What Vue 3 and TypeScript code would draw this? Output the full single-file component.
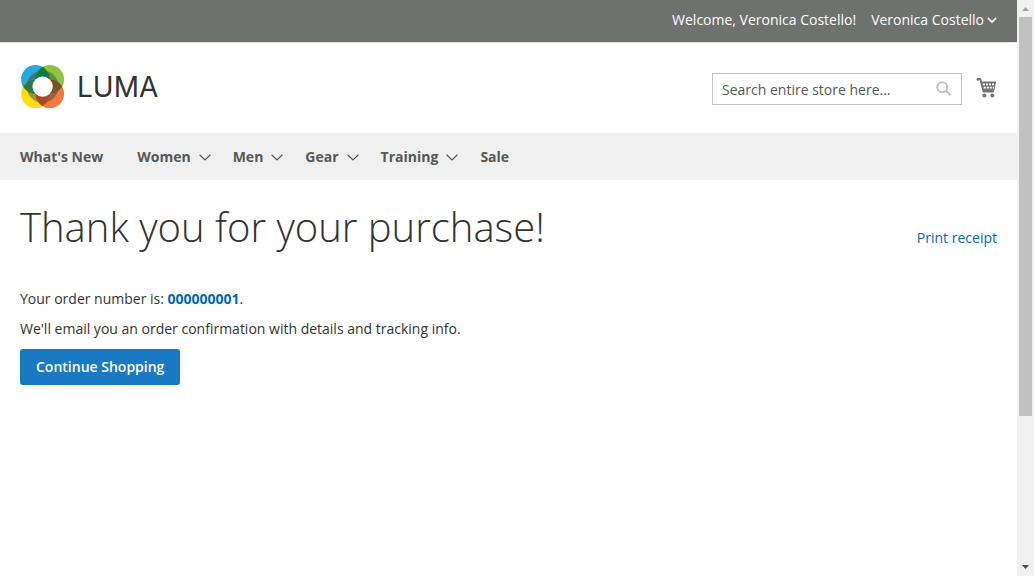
<script setup lang="ts">
import { ref } from 'vue'

interface NavItem {
  label: string
  hasMenu: boolean
}

const customer = 'Veronica Costello'
const orderNumber = '000000001'
const query = ref('')

const navItems: NavItem[] = [
  { label: "What's New", hasMenu: false },
  { label: 'Women', hasMenu: true },
  { label: 'Men', hasMenu: true },
  { label: 'Gear', hasMenu: true },
  { label: 'Training', hasMenu: true },
  { label: 'Sale', hasMenu: false },
]
</script>

<template>
  <div class="window">
    <div class="page">
      <div class="panel">
        <span>Welcome, {{ customer }}!</span>
        <button class="account" type="button">
          {{ customer }}
          <svg class="account-chevron" viewBox="0 0 10 8" aria-hidden="true">
            <path d="M0.8 1.8 L5 6 L9.2 1.8" />
          </svg>
        </button>
      </div>

      <header class="header">
        <a class="logo" href="#" aria-label="Luma">
          <svg class="logo-mark" viewBox="-1 0 45 44" aria-hidden="true">
            <defs>
              <clipPath id="clip-blue"><circle cx="14.4" cy="14.4" r="14.3" /></clipPath>
              <clipPath id="clip-orange"><circle cx="28.8" cy="28.8" r="14.3" /></clipPath>
            </defs>
            <circle cx="14.4" cy="14.4" r="14.3" fill="#25a9e0" />
            <circle cx="28.8" cy="14.4" r="14.3" fill="#8cc63f" />
            <circle cx="28.8" cy="28.8" r="14.3" fill="#f37a3c" />
            <circle cx="14.4" cy="28.8" r="14.3" fill="#fedf17" />
            <circle cx="21.6" cy="21.6" r="16" fill="#4b4a3c" fill-opacity="0.5" />
            <g clip-path="url(#clip-blue)">
              <circle cx="28.8" cy="14.4" r="14.3" fill="#0b7a40" />
              <circle cx="14.4" cy="28.8" r="14.3" fill="#2c7a43" />
            </g>
            <g clip-path="url(#clip-orange)">
              <circle cx="28.8" cy="14.4" r="14.3" fill="#75552c" />
              <circle cx="14.4" cy="28.8" r="14.3" fill="#a64c25" />
            </g>
            <circle cx="21.6" cy="21.6" r="10.2" fill="#fff" />
          </svg>
          <span class="logo-name">LUMA</span>
        </a>

        <div class="tools">
          <form class="search" role="search" @submit.prevent>
            <input
              v-model="query"
              class="search-input"
              type="text"
              aria-label="Search"
              placeholder="Search entire store here..."
            />
            <button class="search-button" type="submit" aria-label="Search">
              <svg viewBox="0 0 16 16" aria-hidden="true">
                <circle cx="6.2" cy="6.2" r="5" />
                <path d="M10 10 L14.6 14.4" />
              </svg>
            </button>
          </form>
          <a class="cart" href="#" aria-label="My Cart">
            <svg viewBox="0 1 21 22" aria-hidden="true">
              <path d="M1.4 1.8 H4.2 L7.6 14.6 H17.8" fill="none" stroke="#757575" stroke-width="2" />
              <circle cx="1.9" cy="2.4" r="1.4" fill="#757575" />
              <path d="M4.6 4.6 H20.2 L18 14.6 H7 Z" fill="#757575" />
              <path
                d="M7 7.4 H18.8 M7.8 10.7 H18"
                fill="none"
                stroke="#fff"
                stroke-width="1.8"
                stroke-dasharray="2 1"
              />
              <circle cx="8.4" cy="18.6" r="2" fill="#757575" />
              <circle cx="16.4" cy="18.6" r="2" fill="#757575" />
            </svg>
          </a>
        </div>
      </header>

      <nav class="nav" aria-label="Main">
        <a
          v-for="item in navItems"
          :key="item.label"
          class="nav-link"
          :class="{ plain: !item.hasMenu }"
          href="#"
        >
          {{ item.label }}
          <svg v-if="item.hasMenu" class="nav-chevron" viewBox="0 0 12 8" aria-hidden="true">
            <path d="M0.6 1.7 L6 7 L11.4 1.7" />
          </svg>
        </a>
      </nav>

      <main class="main">
        <div class="title-row">
          <h1>Thank you for your purchase!</h1>
          <a class="print" href="#">Print receipt</a>
        </div>
        <p>Your order number is: <a class="order" href="#">{{ orderNumber }}</a>.</p>
        <p>We'll email you an order confirmation with details and tracking info.</p>
        <button class="primary" type="button">Continue Shopping</button>
      </main>
    </div>

    <div class="scrollbar" aria-hidden="true">
      <svg class="arrow" viewBox="0 0 17 17"><path d="M5 11 L8.5 7 L12 11 Z" fill="#a3a3a3" /></svg>
      <div class="track">
        <div class="thumb"></div>
        <div class="rest"></div>
      </div>
      <svg class="arrow" viewBox="0 0 17 17"><path d="M5 6 H12 L8.5 10 Z" fill="#505050" /></svg>
    </div>
  </div>
</template>

<style>
body {
  margin: 0;
  background: #fff;
}
</style>

<style scoped>
.window {
  display: grid;
  grid-template-columns: 1fr 17px;
  min-height: 100vh;
  font-family: 'Open Sans', 'Noto Sans', sans-serif;
  font-size: 14px;
  line-height: 20px;
  color: #333;
}

button,
input {
  font: inherit;
  margin: 0;
  padding: 0;
  border: 0;
  background: none;
}

button {
  cursor: pointer;
}

a {
  color: #006bb4;
  text-decoration: none;
}

svg {
  display: block;
}

.page {
  min-width: 0;
}

.panel {
  display: flex;
  justify-content: flex-end;
  gap: 15px;
  padding: 10px 20px 12px;
  border-bottom: 1px solid #e8e8e8;
  background: #6e716e;
  color: #fff;
}

.account {
  display: flex;
  align-items: center;
  gap: 3px;
  color: #fff;
}

.account-chevron {
  width: 10px;
  height: 8px;
  fill: none;
  stroke: #fff;
  stroke-width: 1.6;
}

.header {
  display: flex;
  align-items: center;
  justify-content: space-between;
  padding: 22px 20px 24px;
}

.logo {
  display: flex;
  align-items: center;
  gap: 12px;
  color: #333;
}

.logo-mark {
  width: 45px;
  height: 44px;
}

.logo-name {
  font-family: Inter, sans-serif;
  font-size: 28px;
  font-weight: 400;
  line-height: 44px;
}

.tools {
  display: flex;
  align-items: center;
  gap: 14px;
  padding-top: 4px;
}

.search {
  display: flex;
  align-items: center;
  box-sizing: border-box;
  width: 250px;
  height: 32px;
  padding: 0 9px;
  border: 1px solid #c2c2c2;
  background: #fff;
}

.search-input {
  flex: 1;
  min-width: 0;
  padding-top: 2px;
  outline: none;
  color: #333;
}

.search-input::placeholder {
  color: #575757;
  opacity: 1;
}

.search-button svg {
  width: 16px;
  height: 16px;
  fill: none;
  stroke: #c2c2c2;
  stroke-width: 2;
}

.cart svg {
  width: 21px;
  height: 22px;
}

.nav {
  display: flex;
  gap: 22px;
  padding: 0 20px;
  background: #f0f0f0;
}

.nav-link {
  display: flex;
  align-items: center;
  gap: 8px;
  color: #575757;
  font-weight: 700;
  line-height: 47px;
}

.nav-link.plain {
  padding-right: 12px;
}

.nav-chevron {
  width: 12px;
  height: 8px;
  fill: none;
  stroke: #575757;
  stroke-width: 1.2;
}

.main {
  padding: 25px 20px;
}

.title-row {
  display: flex;
  align-items: flex-start;
  justify-content: space-between;
  margin-bottom: 40px;
}

h1 {
  margin: 0;
  font-size: 40px;
  font-weight: 300;
  line-height: 44px;
}

.print {
  padding-top: 23px;
}

p {
  margin: 0 0 10px;
}

.order {
  font-weight: 700;
}

.primary {
  padding: 8px 16px;
  border-radius: 3px;
  background: #1979c3;
  color: #fff;
  font-weight: 600;
}

.scrollbar {
  display: flex;
  flex-direction: column;
  background: #f1f1f1;
}

.arrow {
  width: 17px;
  height: 17px;
}

.track {
  display: flex;
  flex: 1;
  flex-direction: column;
  padding: 0 2px;
}

.thumb {
  flex: 14;
  background: #c1c1c1;
}

.rest {
  flex: 5;
}
</style>
